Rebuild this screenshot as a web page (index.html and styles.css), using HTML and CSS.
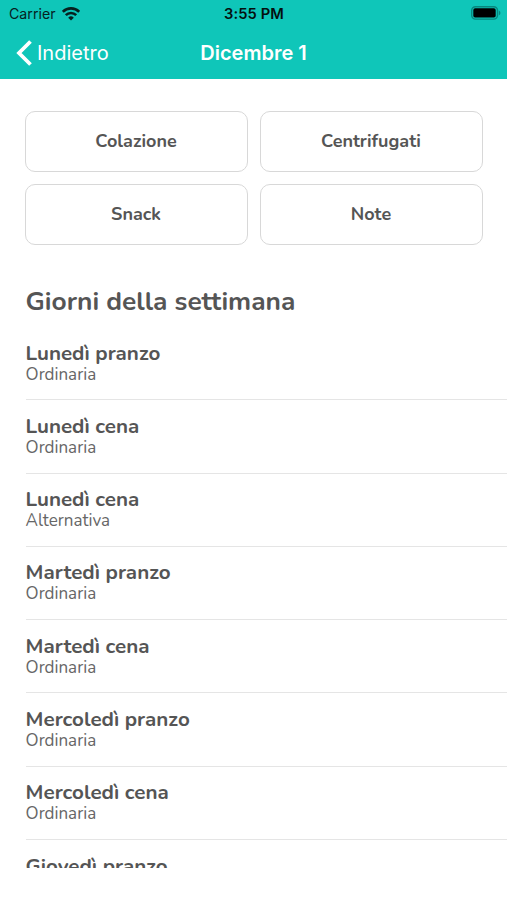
FILE: index.html
```html
<!DOCTYPE html>
<html lang="it">
<head>
<meta charset="utf-8">
<title>Dicembre 1</title>
<link rel="stylesheet" href="styles.css">
</head>
<body>
<header class="header">
  <div class="status">
    <div class="carrier"><span>Carrier</span>
      <svg width="18" height="14" viewBox="0 0 18 14"><g fill="none" stroke="#06211f" stroke-width="2.6"><path d="M.8 4.800a11.600 11.600 0 0 1 16.400 0"/><path d="M3.800 8.200a7.400 7.400 0 0 1 10.400 0"/></g><path d="M9 13.600 6.200 10.700a4 4 0 0 1 5.600 0z" fill="#06211f"/></svg>
    </div>
    <span class="time">3:55 PM</span>
    <svg class="battery" width="30" height="14" viewBox="0 0 30 14"><rect x=".7" y=".7" width="25.800" height="12.400" rx="3.800" fill="none" stroke="#07877e" stroke-width="1.400"/><rect x="2.300" y="2.200" width="22.400" height="9.400" rx="1.800" fill="#000"/><path d="M27.900 4.600a2.500 2.500 0 0 1 0 4.600z" fill="#07877e"/></svg>
  </div>
  <nav class="nav">
    <a class="back"><svg width="17" height="28" viewBox="0 0 17 28"><path d="M15.500 2.500 4 14l11.500 11.500" fill="none" stroke="#fff" stroke-width="3.800"/></svg><span>Indietro</span></a>
    <h1 class="title">Dicembre 1</h1>
  </nav>
</header>
<main class="content">
  <div class="actions">
    <button>Colazione</button><button>Centrifugati</button><button>Snack</button><button>Note</button>
  </div>
  <h2 class="heading">Giorni della settimana</h2>
  <ul class="list">
    <li><b>Lunedì pranzo</b><span>Ordinaria</span></li>
    <li><b>Lunedì cena</b><span>Ordinaria</span></li>
    <li><b>Lunedì cena</b><span>Alternativa</span></li>
    <li><b>Martedì pranzo</b><span>Ordinaria</span></li>
    <li><b>Martedì cena</b><span>Ordinaria</span></li>
    <li><b>Mercoledì pranzo</b><span>Ordinaria</span></li>
    <li><b>Mercoledì cena</b><span>Ordinaria</span></li>
    <li><b>Giovedì pranzo</b><span>Ordinaria</span></li>
  </ul>
</main>
</body>
</html>
```
FILE: styles.css
```css
* { box-sizing: border-box; }
body { margin: 0; background: #fff; color: #555; font-family: Nunito, "Open Sans", sans-serif; }
.header { height: 79px; background: #0fc6b9; font-family: Inter, sans-serif; }
.status { height: 27px; display: grid; grid-template-columns: 1fr auto 1fr; align-items: center; padding: 0 6px 0 9px; color: #06211f; font-size: 14.200px; }
.carrier { display: flex; align-items: center; gap: 6px; }
.time { font-weight: 600; font-size: 14.700px; letter-spacing: .1px; color: #04100f; margin-right: 2px; }
.battery { justify-self: end; position: relative; top: -.500px; }
.nav { height: 52px; display: grid; grid-template-columns: 1fr auto 1fr; align-items: center; padding: 0 15px; color: #fff; }
.back { display: flex; align-items: center; gap: 5px; font-size: 20px; }
.title { margin: 0; font-size: 20px; font-weight: 600; }
.content { height: 789px; overflow: hidden; padding: 32px 0 0 25px; }
.actions { display: grid; grid-template-columns: 1fr 1fr; gap: 12px; margin-right: 24px; }
.actions button { height: 61px; border: 1px solid #d8d8d8; border-radius: 10px; padding: 0 7px 2px 6px; background: #fff; color: #555; font: 700 18px Nunito, "Open Sans", sans-serif; }
.heading { margin: 36px 0 0; padding-left: .500px; font-size: 26.300px; line-height: 40px; font-weight: 700; }
.list { list-style: none; margin: 6px 0 0; padding: 0 0 0 .6px; }
.list li { height: 73.300px; padding-top: 13.500px; border-bottom: 1px solid #e5e5e5; }
.list b { display: block; font-size: 20.600px; line-height: 24px; font-weight: 700; }
.list span { display: block; font-size: 17px; line-height: 19px; color: #666; }
```
